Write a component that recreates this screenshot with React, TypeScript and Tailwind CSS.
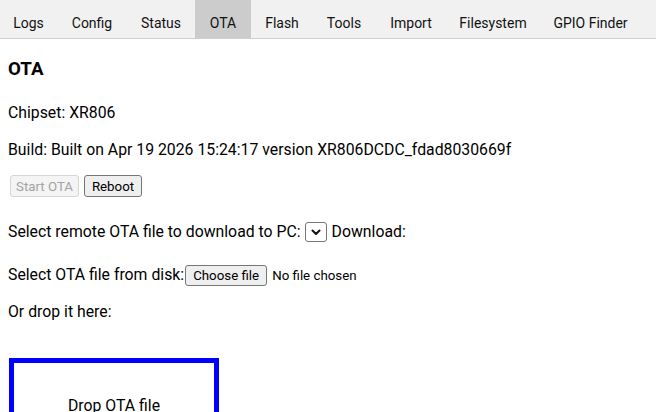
import React from 'react';

const TABS = [
  { label: 'Logs', w: 'w-[57px]' },
  { label: 'Config', w: 'w-[70px]' },
  { label: 'Status', w: 'w-[68px]' },
  { label: 'OTA', w: 'w-[56px]' },
  { label: 'Flash', w: 'w-[62px]' },
  { label: 'Tools', w: 'w-[62px]' },
  { label: 'Import', w: 'w-[72px]' },
  { label: 'Filesystem', w: 'w-[92px]' },
  { label: 'GPIO Finder', w: 'w-[103px]' },
];

const Chevron = () => (
  <svg width="10" height="7" viewBox="0 0 10 7" fill="none">
    <path d="M1.5 1.5 L5 5 L8.5 1.5" stroke="#111" strokeWidth="2" strokeLinecap="round" strokeLinejoin="round" />
  </svg>
);

export default function App() {
  const active = 'OTA';
  return (
    <div className="h-[412px] overflow-hidden bg-white text-black font-['Roboto',sans-serif]">
      <div className="flex h-[39px] border-b border-[#d0d0d0] bg-[#f1f1f1]">
        {TABS.map((t) => (
          <div
            key={t.label}
            className={`${t.w} h-[38px] pt-[14px] text-center text-[14px] leading-[19px] text-[#111] ${
              t.label === active ? 'bg-[#cccccc]' : ''
            }`}
          >
            {t.label}
          </div>
        ))}
      </div>

      <div className="flex flex-col items-start pl-[8px] text-[15.8px] leading-[21px]">
        <h3 className="mt-[18px] text-[18.7px] font-bold leading-[25px]">OTA</h3>
        <p className="mt-[20px]">Chipset: XR806</p>
        <p className="mt-4">Build: Built on Apr 19 2026 15:24:17 version XR806DCDC_fdad8030669f</p>

        <div className="mt-[15px] flex gap-[5px] pl-[2px] text-[13.3px]">
          <button
            disabled
            className="h-[22px] w-[69px] rounded-[3px] border border-[#d6d6d6] bg-[#f4f4f4] text-[#a3a3a3]"
          >
            Start OTA
          </button>
          <button className="h-[22px] w-[58px] rounded-[3px] border border-[#767676] bg-[#efefef] text-black">
            Reboot
          </button>
        </div>

        <div className="mt-[24px] flex items-start">
          <span>Select remote OTA file to download to PC:</span>
          <div className="ml-[4px] mt-[1px] flex h-[20px] w-[22px] items-center justify-center rounded-[3px] border border-[#767676] bg-white">
            <Chevron />
          </div>
          <span className="ml-[5px]">Download:</span>
        </div>

        <div className="mt-[22px] flex items-start">
          <span>Select OTA file from disk:</span>
          <button className="ml-[1px] mt-[1px] h-[21px] w-[82px] rounded-[3px] border border-[#767676] bg-[#efefef] text-[13.3px] leading-[19px]">
            Choose file
          </button>
          <span className="ml-[5px] mt-[2px] text-[13.3px] leading-[19px]">No file chosen</span>
        </div>

        <p className="mt-[15px]">Or drop it here:</p>

        <div className="ml-[1px] mt-[36px] h-[210px] w-[210px] border-[5px] border-[#0000ff] pt-[32px] text-center">
          Drop OTA file
        </div>
      </div>
    </div>
  );
}
